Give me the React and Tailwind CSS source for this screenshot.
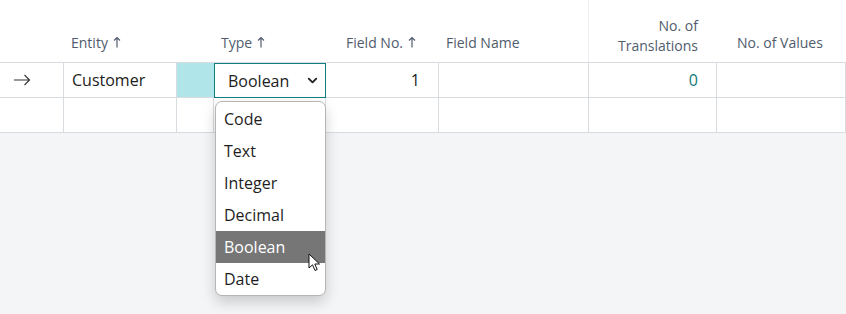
import React from 'react';
import { ChevronDown } from 'lucide-react';

const font = { fontFamily: '"Open Sans", "Noto Sans", sans-serif' };

const SortUp = () => (
  <svg width="8" height="12" viewBox="0 0 8 12" className="ml-[5px] inline-block">
    <path d="M4 11.5V1.5M1 4.5L4 1.5L7 4.5" fill="none" stroke="currentColor" strokeWidth="1.2" />
  </svg>
);

const options = ['Code', 'Text', 'Integer', 'Decimal', 'Boolean', 'Date'];
const cols = 'grid grid-cols-[64px_113px_37px_112px_113px_150px_128px_129px]';

export default function App() {
  return (
    <div className="w-[846px] h-[314px] bg-[#f4f5f7] relative overflow-hidden text-[#212121]" style={font}>
      <div className="bg-white">
        {/* header */}
        <div className={`${cols} h-[63px] border-b border-[#d8dbe0] text-[14px] text-[#505c6d]`}>
          <div />
          <div className="flex items-center pl-[7px] pt-[22px]">Entity<SortUp /></div>
          <div />
          <div className="flex items-center pl-[7px] pt-[22px]">Type<SortUp /></div>
          <div className="flex items-center pl-[20px] pt-[22px]">Field No.<SortUp /></div>
          <div className="flex items-center pl-[7px] pt-[22px] border-r border-[#eceef1]">Field Name</div>
          <div className="flex flex-col items-end justify-end pr-[19px] pb-[6px] leading-[20px] text-right">
            <span>No. of</span>
            <span>Translations</span>
          </div>
          <div className="flex items-center pl-[20px] pt-[22px]">No. of Values</div>
        </div>
        {/* row 1 */}
        <div className={`${cols} h-[35px] border-b border-[#d8dbe0] text-[16px]`}>
          <div className="border-r border-[#d8dbe0] flex items-center pl-[13px]">
            <svg width="18" height="12" viewBox="0 0 18 12">
              <path d="M1 6H16.5M11.5 1L16.5 6L11.5 11" fill="none" stroke="#333" strokeWidth="1.1" />
            </svg>
          </div>
          <div className="border-r border-[#d8dbe0] flex items-center pl-[8px]">Customer</div>
          <div className="bg-[#b0e6ea]" />
          <div className="border border-[#0f7f7f] flex items-center justify-between pl-[13px] pr-[5px] -mb-px">
            <span>Boolean</span>
            <ChevronDown size={15} strokeWidth={3} className="text-[#222]" />
          </div>
          <div className="border-r border-[#d8dbe0] flex items-center justify-end pr-[18px]">1</div>
          <div className="border-r border-[#d8dbe0]" />
          <div className="border-r border-[#d8dbe0] flex items-center justify-end pr-[18px] text-[#0f7a78]">0</div>
          <div className="border-r border-[#d8dbe0]" />
        </div>
        {/* row 2 */}
        <div className={`${cols} h-[35px] border-b border-[#d8dbe0]`}>
          <div className="border-r border-[#d8dbe0]" />
          <div className="border-r border-[#d8dbe0]" />
          <div className="border-r border-[#d8dbe0]" />
          <div className="border-r border-[#d8dbe0]" />
          <div className="border-r border-[#d8dbe0]" />
          <div className="border-r border-[#d8dbe0]" />
          <div className="border-r border-[#d8dbe0]" />
          <div className="border-r border-[#d8dbe0]" />
        </div>
      </div>

      {/* dropdown list */}
      <div className="absolute left-[215px] top-[101px] w-[111px] bg-white border border-[#b5b5b5] rounded-[7px] shadow-[0_6px_14px_rgba(0,0,0,0.18)] pt-[1px] overflow-hidden text-[16px]">
        {options.map((o) => (
          <div
            key={o}
            className={
              o === 'Boolean'
                ? 'h-[32px] flex items-center pl-[8px] bg-[#767676] text-white'
                : 'h-[32px] flex items-center pl-[8px] text-[#1e1e1e]'
            }
          >
            {o}
          </div>
        ))}
      </div>

      {/* mouse cursor */}
      <svg className="absolute left-[308px] top-[253px]" width="13" height="19" viewBox="0 0 13 19">
        <path d="M1 1V15L4.5 11.8L7 17.5L9.2 16.5L6.8 11H11.5Z" fill="white" stroke="#111" strokeWidth="1" strokeLinejoin="round" />
      </svg>
    </div>
  );
}
